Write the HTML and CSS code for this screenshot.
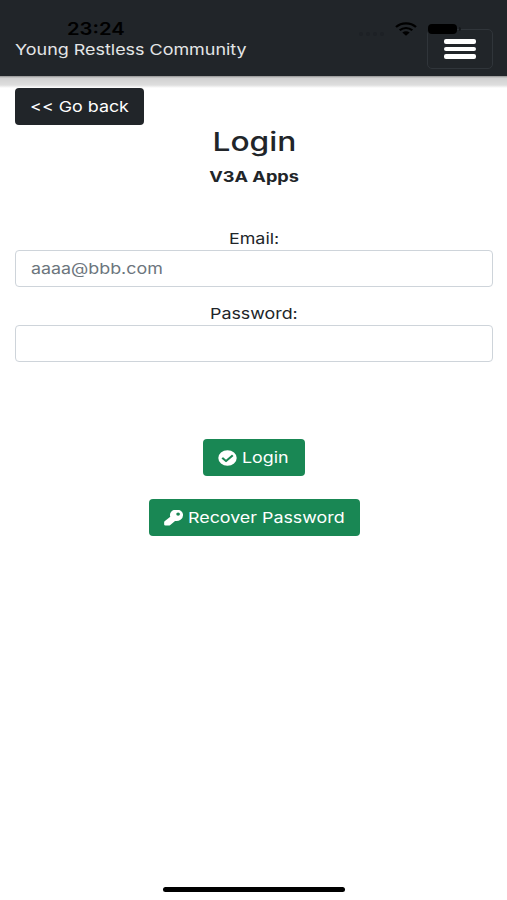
FILE: index.html
```html
<!DOCTYPE html>
<html lang="en">
<head>
  <meta charset="UTF-8">
  <meta name="viewport" content="width=device-width, initial-scale=1">
  <title>Young Restless Community - Login</title>
  <link rel="stylesheet" href="styles.css">
</head>
<body>
  <div class="status-bar">
    <span class="clock"><span class="wide">23:24</span></span>
    <span class="dots"><i></i><i></i><i></i><i></i></span>
    <svg class="wifi" viewBox="0 0 24 15" preserveAspectRatio="none">
      <path d="M2 5.4C7.500 .2 16.500 .2 22 5.400M5.700 8.800c3.600-3.200 9-3.200 12.600 0" fill="none" stroke="#000" stroke-width="2.300"/>
      <path d="M8.300 11.300c2.200-1.800 5.200-1.800 7.400 0L12 14.800z" fill="#000"/>
    </svg>
    <span class="battery"></span>
    <span class="battery-tip"></span>
  </div>

  <nav class="navbar">
    <a class="brand"><span class="wide">Young Restless Community</span></a>
    <button class="toggler" aria-label="Menu">
      <span></span>
      <span></span>
      <span></span>
    </button>
  </nav>
  <div class="strip"></div>

  <main class="content">
    <button class="btn btn-dark"><span class="wide">&lt;&lt; Go back</span></button>
    <h1><span class="wide">Login</span></h1>
    <p class="subtitle"><span class="wide">V3A Apps</span></p>

    <form class="login-form" onsubmit="return false">
      <label for="email"><span class="wide">Email:</span></label>
      <div class="field"><input id="email" type="text" placeholder="aaaa@bbb.com"></div>
      <label for="password"><span class="wide">Password:</span></label>
      <div class="field"><input id="password" type="password"></div>

      <button class="btn btn-green btn-login">
        <svg viewBox="0 0 512 512" preserveAspectRatio="none"><path fill="#fff" fill-rule="evenodd" d="M504 256a248 248 0 1 1-496 0 248 248 0 0 1 496 0zM227 387l184-184c6-6 6-16 0-22l-23-23c-6-6-16-6-22 0L216 308l-70-70c-6-6-16-6-22 0l-23 23c-6 6-6 16 0 22l104 104c6 6 16 6 22 0z"/></svg>
        <span class="wide">Login</span>
      </button>
      <button class="btn btn-green btn-recover">
        <svg viewBox="0 0 512 512" preserveAspectRatio="none"><path fill="#fff" fill-rule="evenodd" d="M512 176a176 176 0 0 1-215 172L170 480a70 70 0 0 1-45 18H40a36 36 0 0 1-36-36v-70a40 40 0 0 1 12-30l154-146A176 176 0 1 1 512 176zM330 130a50 50 0 1 0 100 0 50 50 0 0 0-100 0z"/></svg>
        <span class="wide">Recover Password</span>
      </button>
    </form>
  </main>

  <div class="home-indicator"></div>
</body>
</html>
```
FILE: styles.css
```css
* {
  box-sizing: border-box;
}

body {
  margin: 0;
  height: 900px;
  position: relative;
  overflow: hidden;
  background: #fff;
  color: #212529;
  font-family: Inter, "Liberation Sans", sans-serif;
  font-size: 15px;
  line-height: 23px;
}

/* labels are set slightly extended */
.wide {
  display: inline-block;
  white-space: nowrap;
  transform: scaleX(1.19);
}

/* phone status bar, over the navbar */
.status-bar {
  position: absolute;
  top: 18px;
  left: 67px;
  width: 395px;
  height: 22px;
  display: flex;
  align-items: center;
  color: #000;
}

.clock {
  flex: 1;
  font-size: 17px;
  font-weight: 600;
}

.clock .wide {
  transform-origin: left;
}

.dots {
  display: flex;
  gap: 3px;
  margin: 10px 10px 0 0;
}

.dots i {
  width: 4px;
  height: 4px;
  border-radius: 50%;
  background: #1d2125;
}

.wifi {
  width: 24px;
  height: 14px;
  margin-right: 10px;
}

.battery {
  width: 29px;
  height: 10px;
  border-radius: 4px;
  background: #000;
}

.battery-tip {
  width: 2px;
  height: 4px;
  margin: 0 1px 0 2px;
  border-radius: 0 2px 2px 0;
  background: #15181b;
}

.navbar {
  height: 76px;
  padding: 29px 14px 0 15px;
  display: flex;
  justify-content: space-between;
  align-items: flex-start;
  background: #212529;
}

.brand {
  margin-top: 9px;
  color: #e4e5e6;
}

.brand .wide {
  transform-origin: left;
  transform: scaleX(1.195);
}

.toggler {
  width: 66px;
  height: 40px;
  padding: 0 16px;
  display: flex;
  flex-direction: column;
  justify-content: center;
  gap: 3px;
  border: 1px solid #30353a;
  border-radius: 5px;
  background: none;
}

.toggler span {
  height: 4.5px;
  border-radius: 2px;
  background: #fff;
}

.strip {
  height: 12px;
  background: linear-gradient(#8f8f8f, #d0d0d0 2px, #dedede 9px, #fff);
}

.content {
  padding: 0 14px 0 15px;
}

.btn {
  height: 37px;
  padding: 0;
  display: flex;
  align-items: center;
  justify-content: center;
  border: none;
  border-radius: 4px;
  color: #fff;
  font: inherit;
}

.btn-dark {
  width: 129px;
  background: #212529;
}

h1 {
  margin: 0;
  font-size: 26px;
  font-weight: 450;
  line-height: 33px;
  text-align: center;
}

h1 .wide {
  transform: scaleX(1.22);
}

.subtitle {
  margin: 7px 0 39px;
  font-weight: 700;
  line-height: 23px;
  text-align: center;
}

.subtitle .wide {
  transform: scaleX(1.21);
}

.login-form {
  display: flex;
  flex-direction: column;
  align-items: center;
}

.field {
  width: 100%;
  height: 37px;
  margin-bottom: 15px;
  padding-left: 15px;
  border: 1px solid #ced4da;
  border-radius: 4px;
}

.field input {
  width: 80%;
  height: 35px;
  padding: 0;
  border: none;
  outline: none;
  background: none;
  color: #212529;
  font: inherit;
  transform: scaleX(1.19);
  transform-origin: left;
}

.field input::placeholder {
  color: #6c757d;
}

.btn-green {
  justify-content: flex-start;
  gap: 5px;
  padding-left: 15px;
  background: #198754;
}

.btn-green svg {
  width: 19px;
  height: 16px;
}

.btn-green .wide {
  transform-origin: left;
}

.btn-login {
  width: 102px;
  margin-top: 62px;
}

.btn-recover {
  width: 211px;
  margin-top: 23px;
}

.home-indicator {
  position: absolute;
  left: 163px;
  bottom: 8px;
  width: 182px;
  height: 5px;
  border-radius: 3px;
  background: #000;
}
```
